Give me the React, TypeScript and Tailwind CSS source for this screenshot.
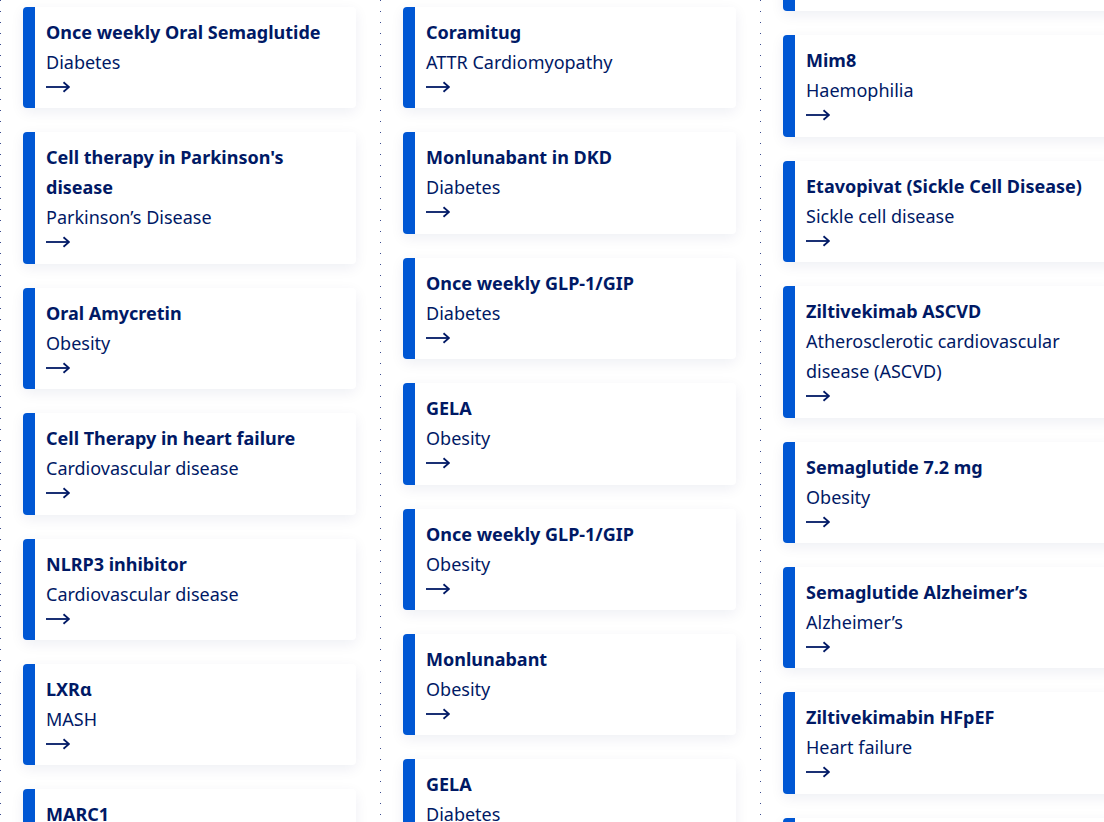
import React from 'react';

interface Project {
  title: string;
  area: string;
}

const columns: { offset: string; items: Project[] }[] = [
  {
    offset: 'mt-[7px]',
    items: [
      { title: 'Once weekly Oral Semaglutide', area: 'Diabetes' },
      { title: "Cell therapy in Parkinson's disease", area: 'Parkinson’s Disease' },
      { title: 'Oral Amycretin', area: 'Obesity' },
      { title: 'Cell Therapy in heart failure', area: 'Cardiovascular disease' },
      { title: 'NLRP3 inhibitor', area: 'Cardiovascular disease' },
      { title: 'LXRα', area: 'MASH' },
      { title: 'MARC1', area: 'MASH' },
    ],
  },
  {
    offset: 'mt-[7px]',
    items: [
      { title: 'Coramitug', area: 'ATTR Cardiomyopathy' },
      { title: 'Monlunabant in DKD', area: 'Diabetes' },
      { title: 'Once weekly GLP-1/GIP', area: 'Diabetes' },
      { title: 'GELA', area: 'Obesity' },
      { title: 'Once weekly GLP-1/GIP', area: 'Obesity' },
      { title: 'Monlunabant', area: 'Obesity' },
      { title: 'GELA', area: 'Diabetes' },
    ],
  },
  {
    offset: '-mt-[90px]',
    items: [
      { title: 'Concizumab', area: 'Haemophilia' },
      { title: 'Mim8', area: 'Haemophilia' },
      { title: 'Etavopivat (Sickle Cell Disease)', area: 'Sickle cell disease' },
      { title: 'Ziltivekimab ASCVD', area: 'Atherosclerotic cardiovascular disease (ASCVD)' },
      { title: 'Semaglutide 7.2 mg', area: 'Obesity' },
      { title: 'Semaglutide Alzheimer’s', area: 'Alzheimer’s' },
      { title: 'Ziltivekimabin HFpEF', area: 'Heart failure' },
      { title: 'Oral Semaglutide 25 mg', area: 'Obesity' },
    ],
  },
];

const Arrow = () => (
  <svg width="24" height="12" viewBox="0 0 24 12" fill="none" className="block">
    <path d="M0 6H23" stroke="#001965" strokeWidth="1.8" />
    <path d="M17.5 1.2L23 6L17.5 10.8" stroke="#001965" strokeWidth="1.8" />
  </svg>
);

const ProjectCard: React.FC<{ project: Project }> = ({ project }) => (
  <a
    href="#"
    className="flex w-[333px] rounded-[4px] bg-white shadow-[0_4px_14px_rgba(0,25,101,0.07)]"
  >
    <div className="w-[12px] shrink-0 rounded-l-[4px] bg-[#0057d4]" />
    <div className="flex-1 pl-[11px] pr-[12px] pt-[10px] pb-[11.4px] text-[#001965]">
      <p className="text-[18px] leading-[30px] font-bold">{project.title}</p>
      <p className="text-[18px] leading-[30px]">{project.area}</p>
      <div className="h-[20px] flex items-center">
        <Arrow />
      </div>
    </div>
  </a>
);

export default function App() {
  return (
    <div className="h-[822px] w-[1104px] overflow-hidden bg-white font-['Noto_Sans',sans-serif]">
      <div className="flex h-full">
        {columns.map((col, i) => (
          <div key={i} className="flex w-[380px] shrink-0">
            {/* dotted separator */}
            <div className="w-px shrink-0 bg-[repeating-linear-gradient(to_bottom,#3d4d8f_0px,#3d4d8f_1px,transparent_1px,transparent_11px)]" />
            <div className={`flex flex-col gap-[24px] pl-[22px] ${col.offset}`}>
              {col.items.map((p, j) => (
                <ProjectCard key={j} project={p} />
              ))}
            </div>
          </div>
        ))}
      </div>
    </div>
  );
}
